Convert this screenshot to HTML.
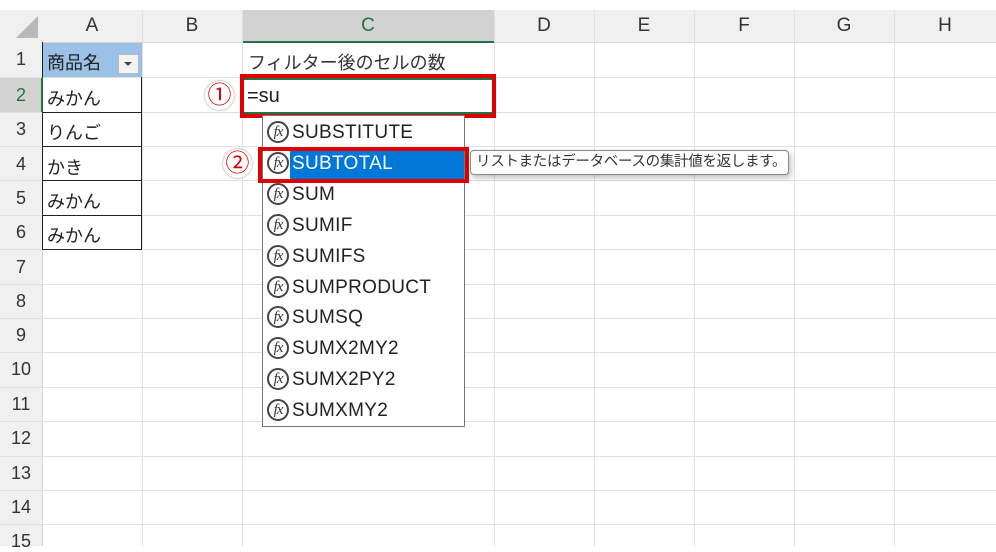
<!DOCTYPE html><html><head><meta charset="utf-8"><style>
body{margin:0;width:996px;height:546px;overflow:hidden;background:#fff;font-family:"Liberation Sans","Noto Sans CJK JP",sans-serif;position:relative}
.a{position:absolute}
.hl{position:absolute;left:0;width:996px;height:1px;background:#e1e1e1}
.vl{position:absolute;top:10px;height:536px;width:1px;background:#e1e1e1}
.ch{position:absolute;top:10px;height:32px;line-height:32px;text-align:center;font-size:19px;color:#333}
.rh{position:absolute;left:0;width:42px;text-align:center;font-size:18px;color:#333}
.cell{position:absolute;font-size:18px;color:#222}
.it{position:absolute;left:264px;width:199px;height:31px;font-size:19px;color:#222;line-height:31px}
.it span.t{position:absolute;left:28px;letter-spacing:0.3px}
.fx{position:absolute;left:3px;top:4px;width:22px;height:22px;border:2px solid #444;border-radius:50%;box-sizing:border-box;font-family:"Liberation Serif",serif;font-style:italic;font-size:15px;line-height:18px;text-align:center;color:#333;background:#fff;letter-spacing:-1px}
</style></head><body>
<div class="a" style="left:0;top:10px;width:996px;height:32px;background:#f0f0f0;border-bottom:1px solid #d4d4d4"></div>
<div class="a" style="left:0;top:42px;width:42px;height:504px;background:#f0f0f0;border-right:1px solid #d4d4d4"></div>
<div class="a" style="left:242px;top:10px;width:252px;height:31px;background:#d2d2d2;border-bottom:2px solid #217346"></div>
<div class="a" style="left:0;top:78px;width:42px;height:34px;background:#d2d2d2"></div>
<svg class="a" style="left:12px;top:14px" width="28" height="26"><polygon points="26,2 26,24 4,24" fill="#b9b9b9"/></svg>
<div class="ch" style="left:42px;width:100px">A</div><div class="ch" style="left:142px;width:100px">B</div><div class="ch" style="left:242px;width:252px;color:#217346">C</div><div class="ch" style="left:494px;width:100px">D</div><div class="ch" style="left:594px;width:100px">E</div><div class="ch" style="left:694px;width:100px">F</div><div class="ch" style="left:794px;width:100px">G</div><div class="ch" style="left:894px;width:102px">H</div>
<div class="vl" style="left:142px"></div><div class="vl" style="left:242px"></div><div class="vl" style="left:494px"></div><div class="vl" style="left:594px"></div><div class="vl" style="left:694px"></div><div class="vl" style="left:794px"></div><div class="vl" style="left:894px"></div>
<div class="hl" style="top:77px"></div><div class="hl" style="top:112px"></div><div class="hl" style="top:146px"></div><div class="hl" style="top:180px"></div><div class="hl" style="top:215px"></div><div class="hl" style="top:249px"></div><div class="hl" style="top:284px"></div><div class="hl" style="top:318px"></div><div class="hl" style="top:352px"></div><div class="hl" style="top:387px"></div><div class="hl" style="top:421px"></div><div class="hl" style="top:456px"></div><div class="hl" style="top:490px"></div><div class="hl" style="top:524px"></div>
<div class="rh" style="top:49px">1</div><div class="rh" style="top:85px;color:#217346">2</div><div class="rh" style="top:119px">3</div><div class="rh" style="top:154px">4</div><div class="rh" style="top:188px">5</div><div class="rh" style="top:222px">6</div><div class="rh" style="top:257px">7</div><div class="rh" style="top:291px">8</div><div class="rh" style="top:325px">9</div><div class="rh" style="top:359px">10</div><div class="rh" style="top:394px">11</div><div class="rh" style="top:428px">12</div><div class="rh" style="top:463px">13</div><div class="rh" style="top:497px">14</div><div class="rh" style="top:531px">15</div>
<div class="a" style="left:42px;top:43px;width:100px;height:34px;background:#9bc2e6"></div>
<div class="a" style="left:118px;top:54px;width:21px;height:20px;background:#f3f3f3;border:1px solid #bbb;box-sizing:border-box"></div>
<svg class="a" style="left:124px;top:62px" width="8" height="5"><polygon points="0,0 8,0 4,4" fill="#444"/></svg>
<div class="a" style="left:42px;top:77px;width:100px;height:173px;border:1px solid #222;border-top:none;box-sizing:border-box"></div>
<div class="a" style="left:42px;top:112px;width:100px;height:1px;background:#222"></div><div class="a" style="left:42px;top:146px;width:100px;height:1px;background:#222"></div><div class="a" style="left:42px;top:180px;width:100px;height:1px;background:#222"></div><div class="a" style="left:42px;top:215px;width:100px;height:1px;background:#222"></div>
<div class="a" style="left:42px;top:42px;width:1px;height:208px;background:#222"></div>
<div class="a" style="left:41px;top:78px;width:2px;height:34px;background:#217346"></div>
<div class="cell" style="left:47px;top:49px">商品名</div><div class="cell" style="left:47px;top:85px">みかん</div><div class="cell" style="left:47px;top:119px">りんご</div><div class="cell" style="left:47px;top:154px">かき</div><div class="cell" style="left:47px;top:188px">みかん</div><div class="cell" style="left:47px;top:222px">みかん</div>
<div class="cell" style="left:248px;top:49px;color:#333">フィルター後のセルの数</div>
<div class="a" style="left:242px;top:78px;width:252px;height:36px;background:#fff;border:2px solid #217346;box-sizing:border-box"></div>
<div class="a" style="left:240px;top:74px;width:256px;height:44px;border:4px solid #e00000;box-sizing:border-box"></div>
<div class="cell" style="left:247px;top:85px;font-size:20px">=su</div>
<div class="a" style="left:205px;top:81px;width:29px;height:29px;border-radius:50%;background:#fff;box-shadow:0 0 2px #888;color:#e00000;font-size:24px;line-height:29px;text-align:center">①</div>
<div class="a" style="left:223px;top:149px;width:29px;height:29px;border-radius:50%;background:#fff;box-shadow:0 0 2px #888;color:#e00000;font-size:24px;line-height:29px;text-align:center">②</div>
<div class="a" style="left:262px;top:115px;width:203px;height:312px;background:#fff;border:1px solid #777;box-sizing:border-box"></div>
<div class="a" style="left:290px;top:151px;width:174px;height:28px;background:#0078d7"></div>
<div class="it" style="top:117px"><div class="fx">fx</div><span class="t">SUBSTITUTE</span></div>
<div class="it" style="top:148px;color:#fff"><div class="fx">fx</div><span class="t">SUBTOTAL</span></div>
<div class="it" style="top:179px"><div class="fx">fx</div><span class="t">SUM</span></div>
<div class="it" style="top:210px"><div class="fx">fx</div><span class="t">SUMIF</span></div>
<div class="it" style="top:241px"><div class="fx">fx</div><span class="t">SUMIFS</span></div>
<div class="it" style="top:272px"><div class="fx">fx</div><span class="t">SUMPRODUCT</span></div>
<div class="it" style="top:302px"><div class="fx">fx</div><span class="t">SUMSQ</span></div>
<div class="it" style="top:333px"><div class="fx">fx</div><span class="t">SUMX2MY2</span></div>
<div class="it" style="top:364px"><div class="fx">fx</div><span class="t">SUMX2PY2</span></div>
<div class="it" style="top:395px"><div class="fx">fx</div><span class="t">SUMXMY2</span></div>
<div class="a" style="left:258px;top:147px;width:211px;height:36px;border:4px solid #e00000;box-sizing:border-box"></div>
<div class="a" style="left:470px;top:150px;width:319px;height:25px;border:1px solid #888;border-radius:4px;background:#fff;box-shadow:2px 3px 6px rgba(0,0,0,.25);font-size:14.5px;line-height:23px;padding-left:5px;box-sizing:border-box;color:#333;white-space:nowrap;letter-spacing:-0.3px">リストまたはデータベースの集計値を返します。</div>
</body></html>
